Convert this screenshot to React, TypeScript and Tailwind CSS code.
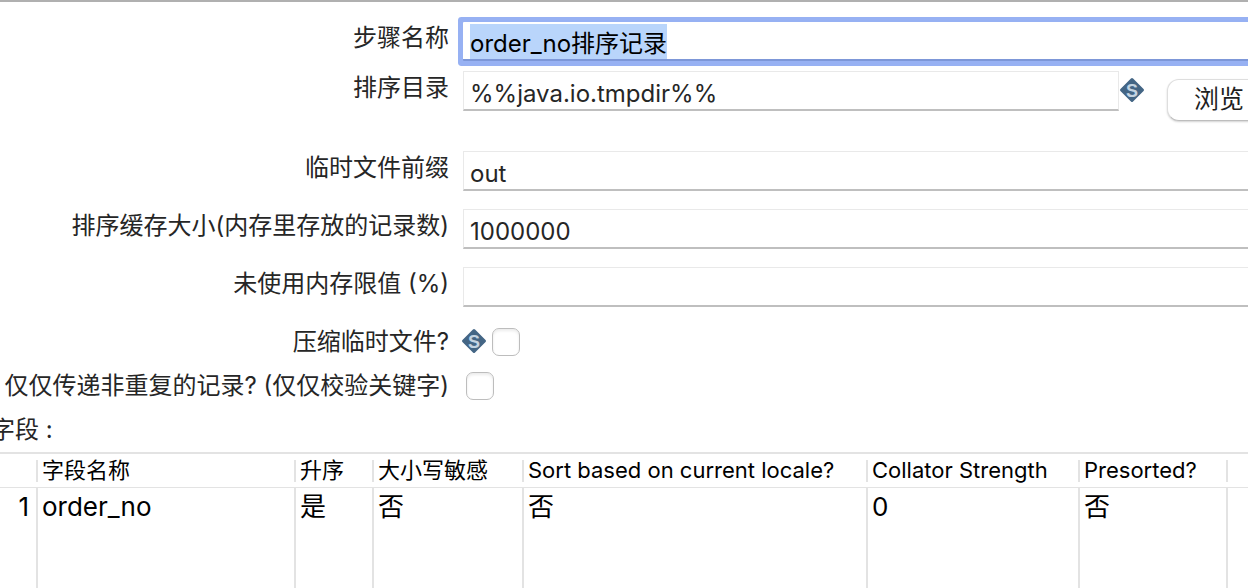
import { useEffect, useRef } from "react";
import type { ReactNode } from "react";

const columns = ["字段名称", "升序", "大小写敏感", "Sort based on current locale?", "Collator Strength", "Presorted?"];
const record = ["order_no", "是", "否", "否", "0", "否"];

const fieldClass =
  "h-10 min-w-0 flex-1 border border-b-2 border-[#e9e9e9] border-b-[#bfbfbf] bg-white pt-[6px] pl-[6px] leading-[30px] text-[#262626] outline-none";
const checkClass =
  "size-7 appearance-none rounded-[7px] border border-[#bdbdbd] bg-white shadow-[inset_0_2px_3px_rgba(0,0,0,0.08)] checked:bg-[#3b82f6]";

function VariableIcon() {
  return (
    <svg className="size-[26px] shrink-0" viewBox="0 0 26 26" aria-hidden="true">
      <path d="M13 2.5 23.5 13 13 23.5 2.5 13Z" fill="#446685" stroke="#446685" strokeWidth="3" strokeLinejoin="round" />
      <text
        x="13"
        y="19.5"
        textAnchor="middle"
        fontFamily="Liberation Sans, sans-serif"
        fontSize="18"
        fontWeight="700"
        fill="#c3d3e1"
      >
        S
      </text>
    </svg>
  );
}

function Row({ id, label, className, children }: { id: string; label: string; className: string; children: ReactNode }) {
  return (
    <div className={`flex items-start gap-[14px] ${className}`}>
      <label htmlFor={id} className="flex w-[449px] shrink-0 justify-end pt-px leading-8 whitespace-nowrap">
        {label}
      </label>
      {children}
    </div>
  );
}

export default function App() {
  const nameRef = useRef<HTMLInputElement>(null);

  useEffect(() => {
    nameRef.current?.focus({ preventScroll: true });
    nameRef.current?.select();
  }, []);

  return (
    <div className="flex h-screen flex-col overflow-clip border-t-2 border-[#b0b0b0] bg-white font-['Inter','Noto_Sans_CJK_SC',sans-serif] text-[24px] text-[#262626]">
      <form className="w-[calc(100%+23px)] shrink-0 pt-[19px]">
        <Row id="step-name" label="步骤名称" className="h-[50px]">
          <input
            ref={nameRef}
            id="step-name"
            defaultValue="order_no排序记录"
            className="mt-px h-[39px] min-w-0 flex-1 rounded-[1px] border-b-2 border-[#7d97d8] bg-white pt-px pl-[7px] leading-8 text-black ring-[5px] ring-[#97b1f3] outline-none selection:bg-[#b9d5fb] selection:text-black"
          />
        </Row>
        <Row id="sort-dir" label="排序目录" className="h-20">
          <div className="flex min-w-0 flex-1 items-start">
            <input id="sort-dir" defaultValue="%%java.io.tmpdir%%" className={fieldClass} />
            <div className="pt-[6px]">
              <VariableIcon />
            </div>
            <button
              type="button"
              className="mt-2 ml-[22px] h-[42px] shrink-0 rounded-xl border border-[#dedede] border-b-[#bdbdbd] bg-white px-[26px] pb-0.5 text-[25px] leading-8 text-[#1f1f1f] shadow-[0_1px_2px_rgba(0,0,0,0.18)]"
            >
              浏览
            </button>
          </div>
        </Row>
        <Row id="prefix" label="临时文件前缀" className="h-[58px]">
          <input id="prefix" defaultValue="out" className={fieldClass} />
        </Row>
        <Row id="cache-size" label="排序缓存大小(内存里存放的记录数)" className="h-[58px]">
          <input id="cache-size" defaultValue="1000000" className={fieldClass} />
        </Row>
        <Row id="free-memory" label="未使用内存限值 (%)" className="h-[58px]">
          <input id="free-memory" className={fieldClass} />
        </Row>
        <Row id="compress" label="压缩临时文件?" className="h-11">
          <div className="-ml-0.5 flex items-start gap-[5px] pt-[3px]">
            <VariableIcon />
            <input id="compress" type="checkbox" className={checkClass} />
          </div>
        </Row>
        <Row id="unique" label="仅仅传递非重复的记录? (仅仅校验关键字)" className="h-11">
          <div className="flex pt-[3px] pl-[3px]">
            <input id="unique" type="checkbox" className={checkClass} />
          </div>
        </Row>
      </form>

      <h2 className="-ml-[9px] h-[39px] shrink-0 pt-px leading-8">字段 :</h2>

      <div className="min-h-0 flex-1">
        <table className="h-full w-full table-fixed border-separate border-spacing-0 border-t-2 border-[#e3e3e3] text-left text-black">
          <colgroup>
            <col className="w-[38px]" />
            <col className="w-[258px]" />
            <col className="w-[78px]" />
            <col className="w-[150px]" />
            <col className="w-[344px]" />
            <col className="w-[212px]" />
            <col className="w-[148px]" />
            <col />
          </colgroup>
          <thead className="text-[22px]">
            <tr className="h-[34px]">
              <td className="border-b border-[#e3e3e3] p-0">
                <div className="h-[22px] border-r-2 border-[#e3e3e3]" />
              </td>
              {columns.map((name) => (
                <th key={name} className="border-b border-[#e3e3e3] p-0 font-normal">
                  <div className="h-[22px] border-r-2 border-[#e3e3e3] pl-1 leading-5 whitespace-nowrap">{name}</div>
                </th>
              ))}
              <td className="border-b border-[#e3e3e3] p-0" />
            </tr>
          </thead>
          <tbody className="text-[26px] leading-8">
            <tr className="h-[38px]">
              <td className="border-r-2 border-[#e3e3e3] p-0 pr-[7px] text-right">1</td>
              {record.map((value, i) => (
                <td key={columns[i]} className="border-r-2 border-[#e3e3e3] p-0 pl-1">
                  {value}
                </td>
              ))}
              <td className="p-0" />
            </tr>
            <tr>
              <td className="border-r-2 border-[#e3e3e3] p-0" />
              {columns.map((name) => (
                <td key={name} className="border-r-2 border-[#e3e3e3] p-0" />
              ))}
              <td className="p-0" />
            </tr>
          </tbody>
        </table>
      </div>
    </div>
  );
}
